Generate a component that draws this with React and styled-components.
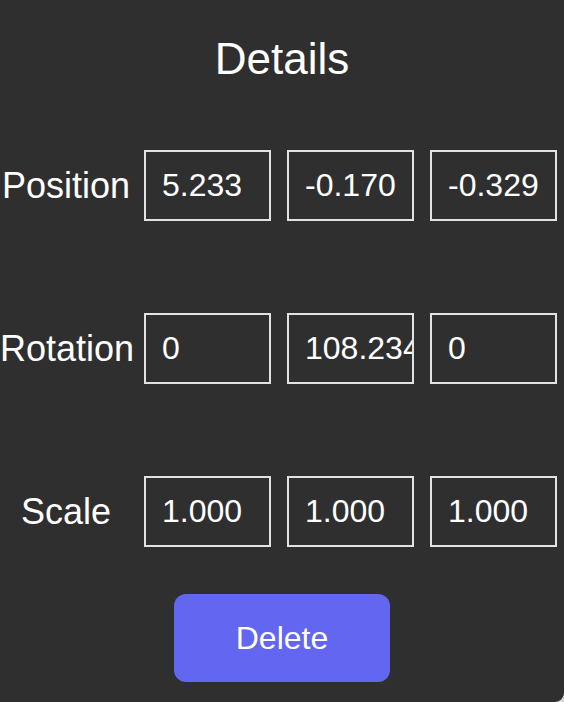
import React from "react";
import styled, { createGlobalStyle } from "styled-components";

const rows = [
  { label: "Position", values: ["5.233", "-0.170", "-0.329"] },
  { label: "Rotation", values: ["0", "108.2345", "0"] },
  { label: "Scale", values: ["1.000", "1.000", "1.000"] },
];

const App = () => {
  return (
    <>
      <GlobalStyle />
      <Panel>
        <Title>Details</Title>
        <Form>
          {rows.map((row) => (
            <Row key={row.label}>
              <Label>{row.label}</Label>
              <Fields>
                {row.values.map((v, i) => (
                  <Field key={i} defaultValue={v} />
                ))}
              </Fields>
            </Row>
          ))}
        </Form>
        <DeleteBtn>Delete</DeleteBtn>
      </Panel>
    </>
  );
};

export default App;

const GlobalStyle = createGlobalStyle`
  html {
    background: #d6d6d6;
  }
  body {
    margin: 0;
    font-family: "Liberation Sans", Arial, Helvetica, sans-serif;
  }
`;

const Panel = styled.div`
  width: 564px;
  height: 702px;
  box-sizing: border-box;
  padding-top: 37px;
  background: #2f2f2f;
  border-bottom-right-radius: 9px;
  display: flex;
  flex-direction: column;
  align-items: center;
  color: #fff;
`;

const Title = styled.h2`
  margin: 0;
  font-size: 44px;
  line-height: 1;
  font-weight: normal;
`;

const Form = styled.div`
  margin-top: 69px;
  width: 100%;
  display: flex;
  flex-direction: column;
  gap: 92px;
`;

const Row = styled.div`
  display: flex;
  align-items: center;
`;

const Label = styled.span`
  width: 132px;
  flex-shrink: 0;
  text-align: center;
  font-size: 36px;
  line-height: 1;
  white-space: nowrap;
`;

const Fields = styled.div`
  display: flex;
  gap: 16px;
  margin-left: 12px;
`;

const Field = styled.input`
  width: 127px;
  height: 71px;
  box-sizing: border-box;
  padding: 0 0 0 16px;
  border: 2px solid #e2e2e2;
  border-radius: 0;
  background: #2f2f2f;
  color: #fff;
  font-family: "Liberation Sans", Arial, Helvetica, sans-serif;
  font-size: 32px;
  outline: none;
`;

const DeleteBtn = styled.button`
  margin-top: 47px;
  width: 216px;
  height: 88px;
  border: none;
  border-radius: 12px;
  background: #6366f1;
  color: #fff;
  font-family: "Liberation Sans", Arial, Helvetica, sans-serif;
  font-size: 32px;
  cursor: pointer;
`;
